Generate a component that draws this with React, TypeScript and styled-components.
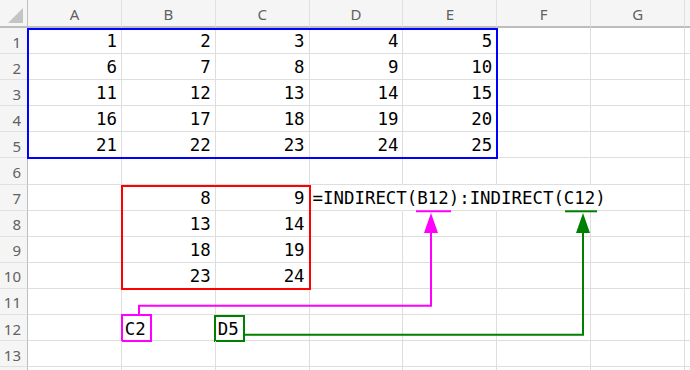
import React from 'react';
import styled, { createGlobalStyle, css } from 'styled-components';

const HEAD_W = 28;
const HEAD_H = 28;
const COL_W = 93.86;
const ROW_H = 26.1;
const COLS = ['A', 'B', 'C', 'D', 'E', 'F', 'G'];
const ROWS = 13;

const GlobalStyle = createGlobalStyle`
  html, body {
    margin: 0;
    padding: 0;
    background: #ffffff;
    overflow: hidden;
  }
`;

// one extra, unlabelled column and row peek in at the window edges
const tracks = css`
  display: grid;
  grid-template-columns: ${HEAD_W}px repeat(${COLS.length + 1}, ${COL_W}px);
  grid-template-rows: ${HEAD_H}px;
  grid-auto-rows: ${ROW_H}px;
`;

const Frame = styled.div`
  position: relative;
  width: 690px;
  height: 370px;
  overflow: hidden;
`;

const Sheet = styled.div`
  ${tracks}
`;

// same tracks as the sheet, laid on top of it for range outlines
const Overlay = styled.div`
  ${tracks}
  position: absolute;
  inset: 0;
  pointer-events: none;
  z-index: 2;
`;

const Corner = styled.div`
  position: relative;
  background: #f5f5f5;
  border-right: 1px solid #bdbdbd;
  border-bottom: 2px solid #bdbdbd;
  box-sizing: border-box;

  &::after {
    content: '';
    position: absolute;
    right: 4px;
    bottom: 3px;
    width: 0;
    height: 0;
    border-left: 15px solid transparent;
    border-bottom: 15px solid #c4c4c4;
  }
`;

const ColHead = styled.div`
  display: flex;
  align-items: center;
  justify-content: center;
  padding-top: 1px;
  background: #f5f5f5;
  border-right: 1px solid #e0e0e0;
  border-bottom: 2px solid #bdbdbd;
  box-sizing: border-box;
  font-family: 'Noto Sans', 'Open Sans', sans-serif;
  font-size: 15px;
  color: #616161;
`;

const RowHead = styled.div`
  display: flex;
  align-items: center;
  justify-content: flex-end;
  padding-right: 6px;
  padding-top: 2px;
  background: #f5f5f5;
  border-right: 1px solid #bdbdbd;
  border-bottom: 1px solid #e0e0e0;
  box-sizing: border-box;
  font-family: 'Noto Sans', 'Open Sans', sans-serif;
  font-size: 15px;
  color: #616161;
`;

const Cell = styled.div<{ $align: 'left' | 'right'; $spill?: boolean }>`
  position: relative;
  display: flex;
  align-items: center;
  justify-content: ${(p) => (p.$align === 'right' ? 'flex-end' : 'flex-start')};
  padding: 1px ${(p) => (p.$align === 'right' ? '4px' : '0')} 0
    ${(p) => (p.$align === 'left' ? '3px' : '0')};
  border-right: 1px solid ${(p) => (p.$spill ? 'transparent' : '#dedede')};
  border-bottom: 1px solid #dedede;
  box-sizing: border-box;
  font-family: 'DejaVu Sans Mono', 'Liberation Mono', monospace;
  font-size: 17.4px;
  color: #000000;
  white-space: nowrap;
  overflow: visible;
  z-index: ${(p) => (p.$spill ? 1 : 0)};
`;

// a cell reference boxed in colour
const RefTag = styled.span<{ $color: string; $shift: number }>`
  align-self: stretch;
  display: flex;
  align-items: center;
  width: 31px;
  margin: ${(p) => -2 + p.$shift}px 0 -2px ${(p) => -4 - p.$shift}px;
  padding: 1px 0 0 2px;
  border: 2px solid ${(p) => p.$color};
  box-sizing: border-box;
  position: relative;
  z-index: 2;
`;

// coloured outline around a block of cells
const RangeBox = styled.div<{ $cols: string; $rows: string; $color: string }>`
  grid-column: ${(p) => p.$cols};
  grid-row: ${(p) => p.$rows};
  margin: 0 -1px -1px -1px;
  border: 2px solid ${(p) => p.$color};
`;

const Connectors = styled.svg`
  position: absolute;
  left: 0;
  top: 0;
  pointer-events: none;
  z-index: 3;
`;

const MAGENTA = '#ff00ff';
const GREEN = '#008000';

const values: Record<string, React.ReactNode> = {
  B7: 8,
  C7: 9,
  B8: 13,
  C8: 14,
  B9: 18,
  C9: 19,
  B10: 23,
  C10: 24,
  D7: '=INDIRECT(B12):INDIRECT(C12)',
  B12: (
    <RefTag $color={MAGENTA} $shift={0}>
      C2
    </RefTag>
  ),
  C12: (
    <RefTag $color={GREEN} $shift={1}>
      D5
    </RefTag>
  ),
};
for (let r = 1; r <= 5; r++) {
  for (let c = 0; c < 5; c++) values[COLS[c] + r] = (r - 1) * 5 + c + 1;
}

// the formula text runs over these cells, so their gridlines are hidden
const spilled = new Set(['D7', 'E7', 'F7']);

export default function App() {
  const cols = [...COLS, ''];
  const rows = Array.from({ length: ROWS + 1 }, (_, i) => i + 1);

  return (
    <>
      <GlobalStyle />
      <Frame>
        <Sheet>
          <Corner />
          {cols.map((c, i) => (
            <ColHead key={i}>{c}</ColHead>
          ))}
          {rows.map((r) => (
            <React.Fragment key={r}>
              <RowHead>{r <= ROWS ? r : ''}</RowHead>
              {cols.map((c, i) => {
                const ref = c + r;
                const v = c ? values[ref] : undefined;
                return (
                  <Cell
                    key={i}
                    $align={typeof v === 'number' ? 'right' : 'left'}
                    $spill={spilled.has(ref)}
                  >
                    {v}
                  </Cell>
                );
              })}
            </React.Fragment>
          ))}
        </Sheet>

        <Overlay>
          <RangeBox $cols="2 / 7" $rows="2 / 7" $color="#0000ff" />
          <RangeBox $cols="3 / 5" $rows="8 / 12" $color="#ff0000" />
        </Overlay>

        <Connectors width={690} height={370} viewBox="0 0 690 370">
          <line x1={416} y1={211.3} x2={451} y2={211.3} stroke={MAGENTA} strokeWidth={2} />
          <path d="M139 314 V305.7 H431 V232" fill="none" stroke={MAGENTA} strokeWidth={2} />
          <polygon points="424,233 438,233 431,213" fill={MAGENTA} />

          <line x1={565} y1={211.3} x2={597} y2={211.3} stroke={GREEN} strokeWidth={2} />
          <path d="M245 334.8 H583 V232" fill="none" stroke={GREEN} strokeWidth={2} />
          <polygon points="576,233 590,233 583,213" fill={GREEN} />
        </Connectors>
      </Frame>
    </>
  );
}
